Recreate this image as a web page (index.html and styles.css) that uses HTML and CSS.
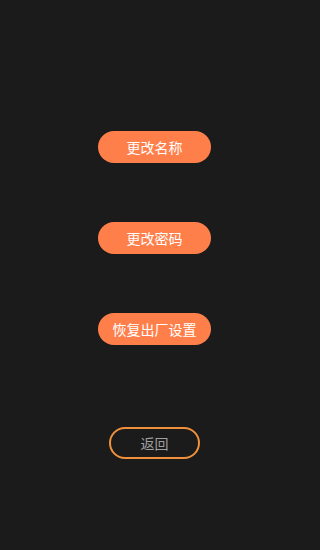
FILE: index.html
```html
<!DOCTYPE html>
<html lang="zh">
<head>
<meta charset="utf-8">
<link rel="stylesheet" href="styles.css">
</head>
<body>
<main class="screen">
  <div class="actions">
    <button class="pill">更改名称</button>
    <button class="pill">更改密码</button>
    <button class="pill">恢复出厂设置</button>
  </div>
  <button class="back">返回</button>
</main>
</body>
</html>
```
FILE: styles.css
```css
html, body {
  margin: 0;
  padding: 0;
  background: #1b1b1b;
}
.screen {
  width: 309px;
  height: 550px;
  display: flex;
  flex-direction: column;
  align-items: center;
  padding-top: 131px;
  box-sizing: border-box;
  font-family: "Noto Sans CJK SC", "Noto Sans", sans-serif;
}
.actions {
  display: flex;
  flex-direction: column;
  align-items: center;
  gap: 59px;
}
.pill {
  width: 113px;
  height: 32px;
  border: none;
  border-radius: 16px;
  background: #ff7f4b;
  color: #ffffff;
  font-family: inherit;
  font-size: 14px;
  line-height: 32px;
  padding: 0;
}
.back {
  margin-top: 82px;
  width: 91px;
  height: 32px;
  border: 2px solid #f0903a;
  border-radius: 16px;
  background: transparent;
  color: #a0a0a0;
  font-family: inherit;
  font-size: 14px;
  padding: 0;
  box-sizing: border-box;
}
```
